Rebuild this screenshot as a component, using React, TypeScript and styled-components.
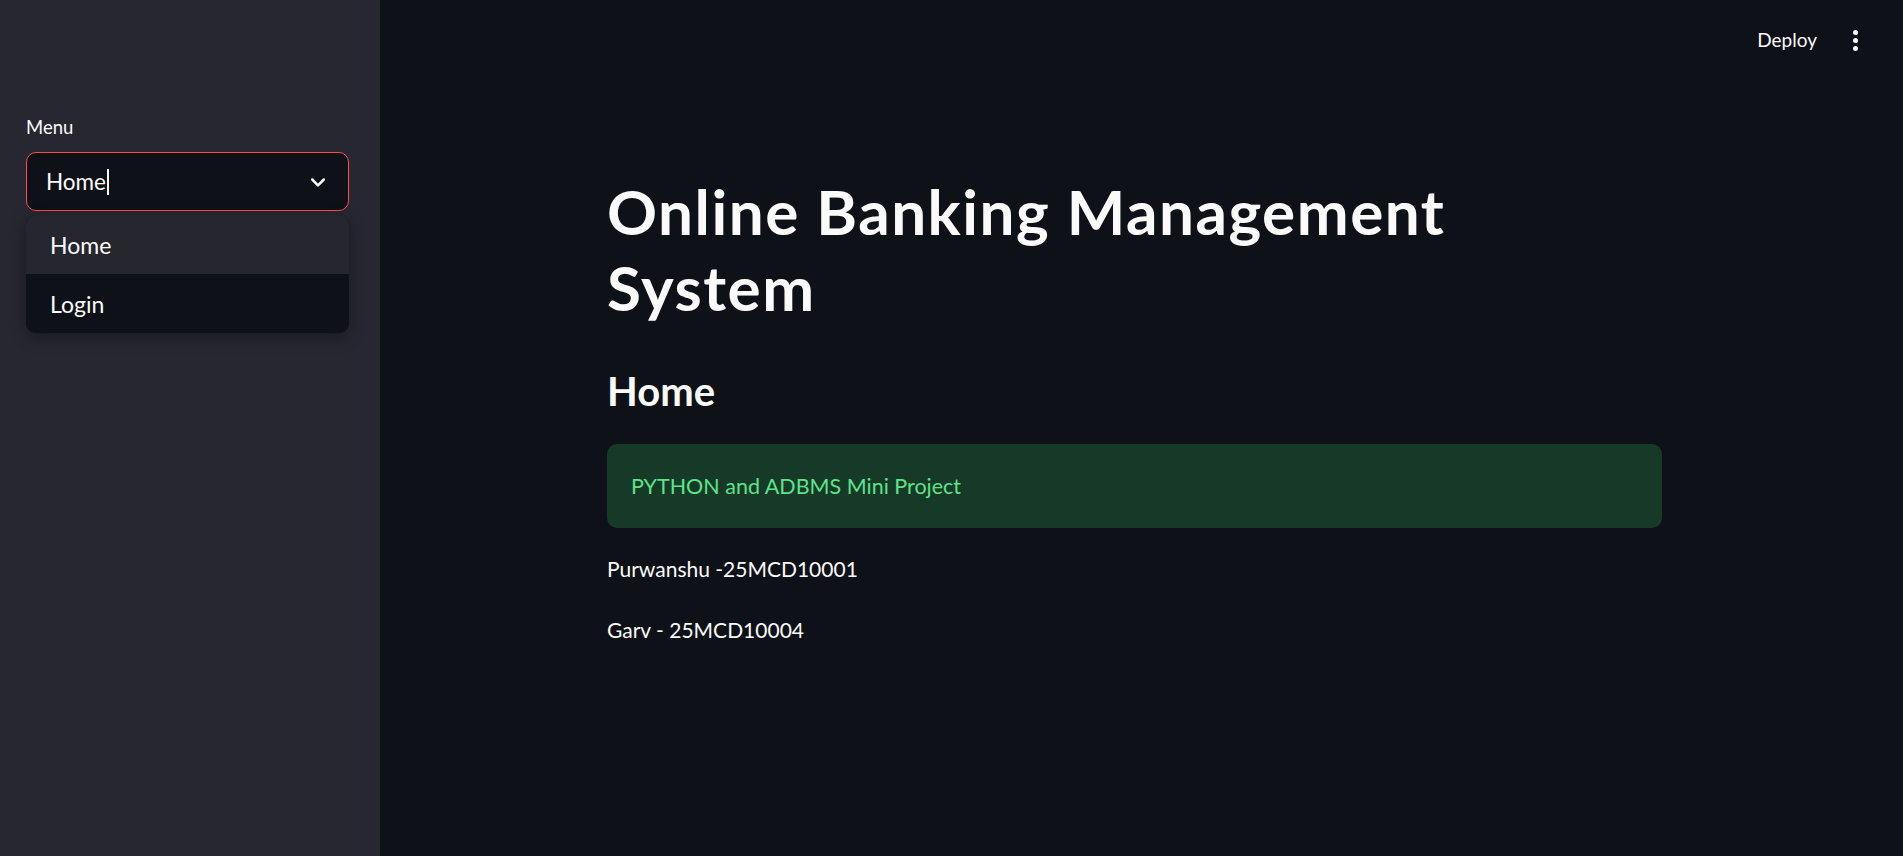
import React from "react";
import styled, { createGlobalStyle } from "styled-components";

const GlobalStyle = createGlobalStyle`
  html, body {
    margin: 0;
    padding: 0;
    background: #0e1117;
  }
  body {
    font-family: Lato, "Noto Sans", sans-serif;
    color: #fafafa;
    overflow: hidden;
  }
  * { box-sizing: border-box; }
`;

const Shell = styled.div`
  display: flex;
  width: 100vw;
  height: 100vh;
`;

const Sidebar = styled.aside`
  flex: none;
  width: 380px;
  height: 100%;
  background: #262730;
  padding: 115px 31px 0 26px;
  display: flex;
  flex-direction: column;
`;

const FieldLabel = styled.label`
  font-size: 18.5px;
  line-height: 24px;
  color: #fafafa;
  margin-bottom: 13px;
`;

const SelectBox = styled.div`
  height: 59px;
  border: 1px solid #ff4b4b;
  border-radius: 10px;
  background: #0e1117;
  display: flex;
  align-items: center;
  padding: 0 20px 0 19px;
`;

const SelectValue = styled.span`
  font-size: 22.5px;
  color: #fafafa;
  display: flex;
  align-items: center;
  flex: 1;
`;

const Caret = styled.span`
  display: inline-block;
  width: 2px;
  height: 26px;
  background: #fafafa;
  margin-left: 1px;
`;

const Dropdown = styled.ul`
  list-style: none;
  margin: 4px 0 0;
  padding: 0;
  border-radius: 10px;
  overflow: hidden;
  background: #0e1117;
  box-shadow: 0 4px 16px rgba(0, 0, 0, 0.35);
`;

const Option = styled.li<{ $active?: boolean }>`
  height: 59px;
  display: flex;
  align-items: center;
  padding-left: 24px;
  font-size: 23px;
  color: #fafafa;
  background: ${(p) => (p.$active ? "#25262e" : "#0e1117")};
`;

const Main = styled.main`
  flex: 1;
  display: flex;
  flex-direction: column;
  min-width: 0;
`;

const Header = styled.header`
  height: 80px;
  display: flex;
  justify-content: flex-end;
  align-items: flex-start;
  padding: 26px 45px 0 0;
  gap: 36px;
`;

const DeployButton = styled.button`
  background: none;
  border: none;
  color: #fafafa;
  font-family: inherit;
  font-size: 19px;
  line-height: 28px;
  padding: 0;
  cursor: pointer;
`;

const Kebab = styled.div`
  display: flex;
  flex-direction: column;
  gap: 3px;
  padding-top: 4px;
  span {
    width: 5px;
    height: 5px;
    border-radius: 50%;
    background: #fafafa;
  }
`;

const Content = styled.div`
  align-self: center;
  width: 1055px;
  margin-right: 14px;
  display: flex;
  flex-direction: column;
`;

const Title = styled.h1`
  margin: 93px 0 0;
  font-size: 62px;
  line-height: 76px;
  letter-spacing: 1.5px;
  font-weight: 700;
  color: #fafafa;
  max-width: 900px;
`;

const SectionHeading = styled.h2`
  margin: 39px 0 0;
  font-size: 40px;
  line-height: 54px;
  font-weight: 700;
  color: #fafafa;
`;

const SuccessBox = styled.div`
  margin-top: 26px;
  height: 84px;
  border-radius: 10px;
  background: #173928;
  color: #5ce488;
  font-size: 21.5px;
  display: flex;
  align-items: center;
  padding-left: 24px;
`;

const Paragraph = styled.p`
  margin: 0;
  font-size: 21px;
  line-height: 61px;
  color: #fafafa;
`;

const Body = styled.div`
  margin-top: 10px;
  display: flex;
  flex-direction: column;
`;

function ChevronDown() {
  return (
    <svg width="20" height="20" viewBox="0 0 24 24" fill="none" stroke="#fafafa" strokeWidth="3" strokeLinecap="round" strokeLinejoin="round">
      <path d="M5 9l7 7 7-7" />
    </svg>
  );
}

export default function App() {
  return (
    <>
      <GlobalStyle />
      <Shell>
        <Sidebar>
          <FieldLabel>Menu</FieldLabel>
          <SelectBox>
            <SelectValue>
              Home
              <Caret />
            </SelectValue>
            <ChevronDown />
          </SelectBox>
          <Dropdown>
            <Option $active>Home</Option>
            <Option>Login</Option>
          </Dropdown>
        </Sidebar>
        <Main>
          <Header>
            <DeployButton>Deploy</DeployButton>
            <Kebab>
              <span />
              <span />
              <span />
            </Kebab>
          </Header>
          <Content>
            <Title>Online Banking Management System</Title>
            <SectionHeading>Home</SectionHeading>
            <SuccessBox>PYTHON and ADBMS Mini Project</SuccessBox>
            <Body>
              <Paragraph>Purwanshu -25MCD10001</Paragraph>
              <Paragraph>Garv - 25MCD10004</Paragraph>
            </Body>
          </Content>
        </Main>
      </Shell>
    </>
  );
}
